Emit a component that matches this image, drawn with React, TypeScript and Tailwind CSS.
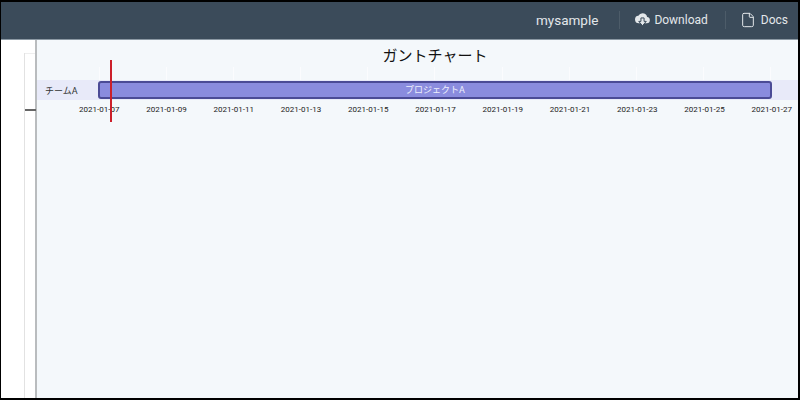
import { File } from 'lucide-react';

const dates = [
  '2021-01-07',
  '2021-01-09',
  '2021-01-11',
  '2021-01-13',
  '2021-01-15',
  '2021-01-17',
  '2021-01-19',
  '2021-01-21',
  '2021-01-23',
  '2021-01-25',
  '2021-01-27',
];

const font = 'font-["Roboto","Noto_Sans_CJK_JP",sans-serif]';

const CloudDownload = () => (
  <svg viewBox="0 0 24 24" className="h-[15px] w-[15px] fill-[#e3e7ea]">
    <path d="M19.35 8.04A7.49 7.49 0 0 0 12 2a7.5 7.5 0 0 0-6.65 4.04A6 6 0 0 0 6 18h13a5 5 0 0 0 .35-9.96z" />
    <path d="M9.5 9.5h5v5.5h3.5L12 22l-6-7h3.5z" stroke="#3b4b5a" strokeWidth="1.6" />
  </svg>
);

const App = () => {
  return (
    <div className={`flex h-[400px] w-[800px] flex-col border-t-2 border-r-2 border-b-2 border-l border-black ${font}`}>
      <header className="flex h-[38px] shrink-0 items-center justify-end border-b border-[#8b98a3] bg-[#3b4b5a] pb-[2px] text-[#e3e7ea]">
        <span className="translate-y-px text-[13.5px]">mysample</span>
        <div className="mr-[15px] ml-[21px] h-[18px] w-px bg-[#4d5c69]" />
        <a className="flex items-center gap-[4px] text-[12px]">
          <CloudDownload />
          Download
        </a>
        <div className="mr-[14px] ml-[17px] h-[18px] w-px bg-[#4d5c69]" />
        <a className="mr-[10px] flex items-center gap-[5px] text-[12px]">
          <File size={16} strokeWidth={1.5} />
          Docs
        </a>
      </header>
      <div className="flex min-h-0 flex-1">
        <aside className="relative w-[36px] shrink-0 border-r-2 border-[#b9bcbe] bg-white">
          <div className="absolute top-[13px] bottom-0 left-[23px] w-[2px] border-l border-[#e2e2e2]" />
          <div className="absolute top-[13px] left-[24px] h-px w-[10px] bg-[#eeeeee]" />
          <div className="absolute top-[69px] left-[24px] h-[2px] w-[11px] bg-[#666666]" />
        </aside>
        <main className="relative flex-1 bg-[#f4f8fb]">
          <h1 className="pt-[5px] pl-[35px] text-center text-[15px] leading-[22px] text-[#111]">ガントチャート</h1>
          <div className="ml-[62px] flex h-[13px] w-[672px] justify-between">
            {dates.map(d => (
              <div key={d} className="h-full w-px bg-[#fbfcfe]" />
            ))}
          </div>
          <div className="flex h-[20px] items-center bg-[#e8eaf9]">
            <span className="w-[61px] shrink-0 pt-[4px] pl-2 text-[9px] text-[#333]">チームA</span>
            <div className="flex h-[18px] w-[674px] items-center justify-center rounded-[3px] border-2 border-[#4b4b96] bg-[#8a8cde] pt-px text-[9px] text-[#eeeffc]">
              プロジェクトA
            </div>
          </div>
          <div className="mt-[3px] ml-[42px] flex w-[713px] justify-between text-[8px] leading-[14px] text-[#222]">
            {dates.map(d => (
              <span key={d}>{d}</span>
            ))}
          </div>
          <div className="absolute top-[20px] left-[73px] h-[62px] w-[2px] bg-[#cc1f2a]" />
        </main>
      </div>
    </div>
  );
};

export default App;
